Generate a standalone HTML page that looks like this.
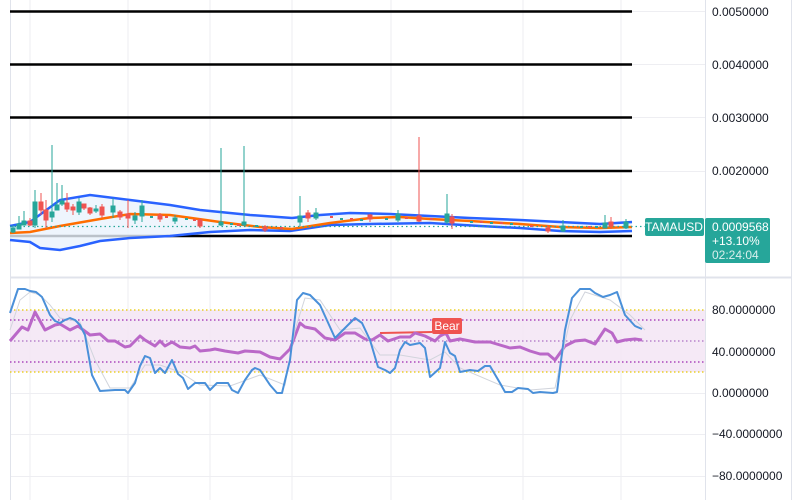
<!DOCTYPE html>
<html><head><meta charset="utf-8"><style>
html,body{margin:0;padding:0;background:#fff;width:802px;height:500px;overflow:hidden;font-family:"Liberation Sans",sans-serif}
.ax{position:absolute;left:712px;font-size:12px;color:#131722}
</style></head><body>
<svg width="802" height="500" style="position:absolute;left:0;top:0">
<!-- grid -->
<g stroke="#eeeef2" stroke-width="1">
<line x1="30" y1="0" x2="30" y2="500"/><line x1="128" y1="0" x2="128" y2="500"/><line x1="210" y1="0" x2="210" y2="500"/><line x1="292" y1="0" x2="292" y2="500"/><line x1="391" y1="0" x2="391" y2="500"/><line x1="523" y1="0" x2="523" y2="500"/><line x1="621" y1="0" x2="621" y2="500"/>
<line x1="10" y1="11.5" x2="705" y2="11.5"/><line x1="10" y1="64.5" x2="705" y2="64.5"/><line x1="10" y1="117.5" x2="705" y2="117.5"/><line x1="10" y1="171.5" x2="705" y2="171.5"/>
<line x1="10" y1="393.5" x2="705" y2="393.5"/><line x1="10" y1="434.5" x2="705" y2="434.5"/><line x1="10" y1="476.5" x2="705" y2="476.5"/>
</g>
<line x1="10.5" y1="0" x2="10.5" y2="500" stroke="#e0e3eb"/>
<line x1="705.5" y1="0" x2="705.5" y2="500" stroke="#e0e3eb"/>
<line x1="791.5" y1="0" x2="791.5" y2="500" stroke="#e0e3eb"/>
<line x1="10" y1="277.5" x2="792" y2="277.5" stroke="#e0e3eb" stroke-width="2"/>
<!-- black levels -->
<g stroke="#000" stroke-width="2.4">
<line x1="10" y1="11.5" x2="632" y2="11.5"/><line x1="10" y1="64.5" x2="632" y2="64.5"/><line x1="10" y1="117.5" x2="632" y2="117.5"/><line x1="10" y1="171" x2="632" y2="171"/><line x1="10" y1="236" x2="632" y2="236"/>
</g>
<!-- bollinger fill -->
<polygon fill="#eaf3fd" opacity="0.8" points="10,226 30,222 60,200 90,195 130,200 170,205 200,210 250,215 292,218 320,215 350,213 390,214 430,216 470,218 520,220 560,222 600,224 632,222 632,231 600,232 560,231 520,228 480,226 430,223 370,224 330,225 310,228 290,231 250,230 210,232 170,236 130,238 100,241 80,246 60,250 40,248 30,242 10,240"/>
<polyline fill="none" stroke="#2962ff" stroke-width="2.5" points="10,226 30,222 60,200 90,195 130,200 170,205 200,210 250,215 292,218 320,215 350,213 390,214 430,216 470,218 520,220 560,222 600,224 632,222"/>
<polyline fill="none" stroke="#2962ff" stroke-width="2.5" points="10,240 30,242 40,248 60,250 80,246 100,241 130,238 170,236 210,232 250,230 290,231 310,228 330,225 370,224 430,223 480,226 520,228 560,231 600,232 632,231"/>
<polyline fill="none" stroke="#ff6d00" stroke-width="2.5" points="10,233 30,232 60,226 100,219 130,214 170,215 220,222 260,227 292,229 330,223 370,218 400,217 430,219 470,221 520,224 560,227 600,228 632,227"/>
<line x1="10" y1="226.5" x2="645" y2="226.5" stroke="#26a69a" stroke-dasharray="1.5,3" stroke-width="1.2"/>
<!-- candles -->
<g stroke-width="1">
<g stroke="#26a69a" fill="#26a69a">
<line x1="13" y1="225" x2="13" y2="233"/><rect x="11" y="228" width="4" height="4"/>
<line x1="19" y1="216" x2="19" y2="229"/><rect x="17" y="224" width="4" height="5"/>
<line x1="24" y1="211" x2="24" y2="225"/><rect x="22" y="221" width="4" height="4"/>
<line x1="35" y1="190" x2="35" y2="228"/><rect x="33" y="202" width="4" height="23"/>
<line x1="52" y1="145" x2="52" y2="222"/><rect x="50" y="212" width="4" height="5"/>
<line x1="57" y1="183" x2="57" y2="210"/><rect x="55" y="205" width="4" height="5"/>
<line x1="62" y1="185" x2="62" y2="206"/><rect x="60" y="201" width="4" height="3"/>
<line x1="79" y1="198" x2="79" y2="215"/><rect x="77" y="202" width="4" height="10"/>
<line x1="96" y1="205" x2="96" y2="213"/><rect x="94" y="209" width="4" height="2"/>
<line x1="113" y1="198" x2="113" y2="218"/><rect x="111" y="206" width="4" height="6"/>
<line x1="135" y1="212" x2="135" y2="224"/><rect x="133" y="216" width="4" height="4"/>
<line x1="142" y1="200" x2="142" y2="222"/><rect x="140" y="206" width="4" height="10"/>
<line x1="175" y1="215" x2="175" y2="224"/><rect x="173" y="218" width="4" height="3"/>
<line x1="221" y1="148" x2="221" y2="226"/><rect x="219" y="222" width="4" height="3"/>
<line x1="244" y1="146" x2="244" y2="226"/><rect x="242" y="222" width="4" height="3"/>
<line x1="300" y1="196" x2="300" y2="226"/><rect x="298" y="216" width="4" height="6"/>
<line x1="316" y1="208" x2="316" y2="220"/><rect x="314" y="213" width="4" height="5"/>
<line x1="398" y1="210" x2="398" y2="222"/><rect x="396" y="214" width="4" height="6"/>
<line x1="447" y1="194" x2="447" y2="224"/><rect x="445" y="214" width="4" height="8"/>
<line x1="563" y1="220" x2="563" y2="232"/><rect x="561" y="226" width="4" height="5"/>
<line x1="605" y1="215" x2="605" y2="228"/><rect x="603" y="223" width="4" height="5"/>
<line x1="626" y1="219" x2="626" y2="229"/><rect x="624" y="222" width="4" height="6"/>
</g>
<g stroke="#ef5350" fill="#ef5350">
<line x1="30" y1="218" x2="30" y2="226"/><rect x="28" y="221" width="4" height="4"/>
<line x1="41" y1="193" x2="41" y2="215"/><rect x="39" y="202" width="4" height="8"/>
<line x1="46" y1="200" x2="46" y2="228"/><rect x="44" y="210" width="4" height="10"/>
<line x1="67" y1="193" x2="67" y2="212"/><rect x="65" y="203" width="4" height="6"/>
<line x1="73" y1="204" x2="73" y2="215"/><rect x="71" y="207" width="4" height="3"/>
<line x1="84" y1="204" x2="84" y2="210"/><rect x="82" y="204" width="4" height="4"/>
<line x1="90" y1="207" x2="90" y2="215"/><rect x="88" y="208" width="4" height="5"/>
<line x1="102" y1="204" x2="102" y2="218"/><rect x="100" y="207" width="4" height="8"/>
<line x1="120" y1="210" x2="120" y2="220"/><rect x="118" y="212" width="4" height="5"/>
<line x1="128" y1="200" x2="128" y2="228"/><rect x="126" y="214" width="4" height="4"/>
<line x1="160" y1="213" x2="160" y2="222"/><rect x="158" y="215" width="4" height="4"/>
<line x1="200" y1="218" x2="200" y2="228"/><rect x="198" y="220" width="4" height="6"/>
<line x1="265" y1="225" x2="265" y2="232"/><rect x="263" y="227" width="4" height="3"/>
<line x1="308" y1="210" x2="308" y2="222"/><rect x="306" y="213" width="4" height="5"/>
<line x1="370" y1="214" x2="370" y2="222"/><rect x="368" y="215" width="4" height="4"/>
<line x1="419" y1="137" x2="419" y2="222"/><rect x="417" y="216" width="4" height="5"/>
<line x1="452" y1="214" x2="452" y2="229"/><rect x="450" y="217" width="4" height="6"/>
<line x1="548" y1="225" x2="548" y2="233"/><rect x="546" y="228" width="4" height="3"/>
<line x1="611" y1="217" x2="611" y2="229"/><rect x="609" y="222" width="4" height="4"/>
</g>
<g fill="#26a69a"><rect x="150" y="216" width="3" height="2"/><rect x="185" y="218" width="3" height="2"/><rect x="230" y="223" width="3" height="2"/><rect x="255" y="225" width="3" height="2"/><rect x="340" y="218" width="3" height="2"/><rect x="360" y="219" width="3" height="2"/><rect x="385" y="218" width="3" height="2"/><rect x="470" y="221" width="3" height="2"/><rect x="490" y="222" width="3" height="2"/><rect x="510" y="223" width="3" height="2"/><rect x="580" y="226" width="3" height="2"/><rect x="595" y="226" width="3" height="2"/></g>
<g fill="#ef5350"><rect x="165" y="216" width="3" height="2"/><rect x="193" y="219" width="3" height="2"/><rect x="237" y="224" width="3" height="2"/><rect x="280" y="227" width="3" height="2"/><rect x="330" y="216" width="3" height="2"/><rect x="350" y="218" width="3" height="2"/><rect x="405" y="217" width="3" height="2"/><rect x="430" y="218" width="3" height="2"/><rect x="480" y="221" width="3" height="2"/><rect x="500" y="222" width="3" height="2"/><rect x="530" y="225" width="3" height="2"/><rect x="588" y="226" width="3" height="2"/></g>
</g>
<!-- lower pane -->
<rect x="10" y="310" width="695" height="62" fill="#f3e5f5" opacity="0.85"/>
<g stroke-dasharray="1.5,2.5" stroke-width="1.2">
<line x1="10" y1="310" x2="705" y2="310" stroke="#e6c800"/><line x1="10" y1="372" x2="705" y2="372" stroke="#e6c800"/>
<line x1="10" y1="320" x2="705" y2="320" stroke="#9c27b0"/><line x1="10" y1="362" x2="705" y2="362" stroke="#9c27b0"/><line x1="10" y1="341" x2="705" y2="341" stroke="#7b1fa2" opacity="0.6"/>
</g>
<polyline fill="none" stroke="#ef5350" stroke-width="2" points="380,333 432,332"/>
<polyline fill="none" stroke="#ba68c8" stroke-width="3" stroke-linejoin="round" points="10,341 22,327 28,330 35,312 45,330 55,325 60,324 70,330 78,326 90,335 100,334 108,341 115,341 125,347 130,346 140,336 145,340 155,346 160,341 165,346 172,342 180,347 190,348 195,346 200,351 210,350 215,349 225,351 238,353 245,351 260,352 270,357 280,359 290,349 300,323 305,327 315,329 325,338 335,340 345,333 355,333 365,339 372,340 380,335 388,341 400,337 410,337 415,333 425,336 435,341 440,336 446,333 450,341 460,339 475,342 490,342 500,345 510,348 520,347 530,351 540,354 548,354 555,360 565,346 575,341 585,340 595,344 605,329 612,333 617,342 625,340 635,339 642,340"/>
<polyline fill="none" stroke="#d1d4dc" stroke-width="1" points="10,330 20,300 30,292 40,295 50,305 60,318 80,322 95,360 110,388 130,388 145,365 160,365 180,372 200,385 230,386 260,375 285,385 295,330 305,298 320,300 340,330 360,328 380,355 400,355 430,360 445,352 460,368 500,385 530,390 555,388 570,320 585,292 610,300 630,315 645,330"/>
<polyline fill="none" stroke="#4a90d9" stroke-width="2" stroke-linejoin="round" points="10,313 18,289 25,289 30,291 36,292 42,297 50,315 55,321 60,323 65,320 70,318 75,320 80,325 85,335 92,375 100,391 115,390 125,390 128,393 135,383 140,366 145,356 150,358 155,373 160,368 165,373 172,360 178,374 183,378 188,389 195,383 205,383 210,390 217,383 228,383 232,390 238,393 245,380 252,370 255,368 260,370 270,385 277,393 282,393 290,360 297,300 303,293 310,295 320,305 335,338 345,328 355,318 362,323 370,340 378,367 385,370 390,373 395,368 400,350 405,342 410,345 420,343 425,348 430,377 440,368 445,342 450,353 455,356 460,372 470,370 478,371 485,366 490,366 500,383 505,392 512,392 518,388 528,389 533,393 540,392 553,393 557,392 565,330 572,298 580,289 590,289 595,293 603,297 610,295 617,292 625,315 635,326 642,329"/>
<rect x="432" y="318" width="30" height="16" rx="2" fill="#ef5350"/>
<text x="447" y="330" font-size="12" fill="#fff" text-anchor="middle" font-family="Liberation Sans">Bear</text>
<!-- labels -->
<rect x="645" y="218" width="59" height="18" rx="2" fill="#26a69a"/>
<text x="674" y="231" font-size="12" fill="#fff" text-anchor="middle" font-family="Liberation Sans">TAMAUSD</text>
<rect x="705" y="218" width="65" height="45" rx="2" fill="#26a69a"/>
<text x="712" y="231" font-size="12" fill="#fff" font-family="Liberation Sans">0.0009568</text>
<text x="712" y="245" font-size="12" fill="#fff" font-family="Liberation Sans">+13.10%</text>
<text x="712" y="259" font-size="12" fill="#d8efec" font-family="Liberation Sans">02:24:04</text>
</svg>
<div class="ax" style="top:5px">0.0050000</div>
<div class="ax" style="top:58px">0.0040000</div>
<div class="ax" style="top:111px">0.0030000</div>
<div class="ax" style="top:164px">0.0020000</div>
<div class="ax" style="top:303px">80.0000000</div>
<div class="ax" style="top:345px">40.0000000</div>
<div class="ax" style="top:386px">0.0000000</div>
<div class="ax" style="top:427px;left:712px">−40.0000000</div>
<div class="ax" style="top:469px;left:712px">−80.0000000</div>
</body></html>
